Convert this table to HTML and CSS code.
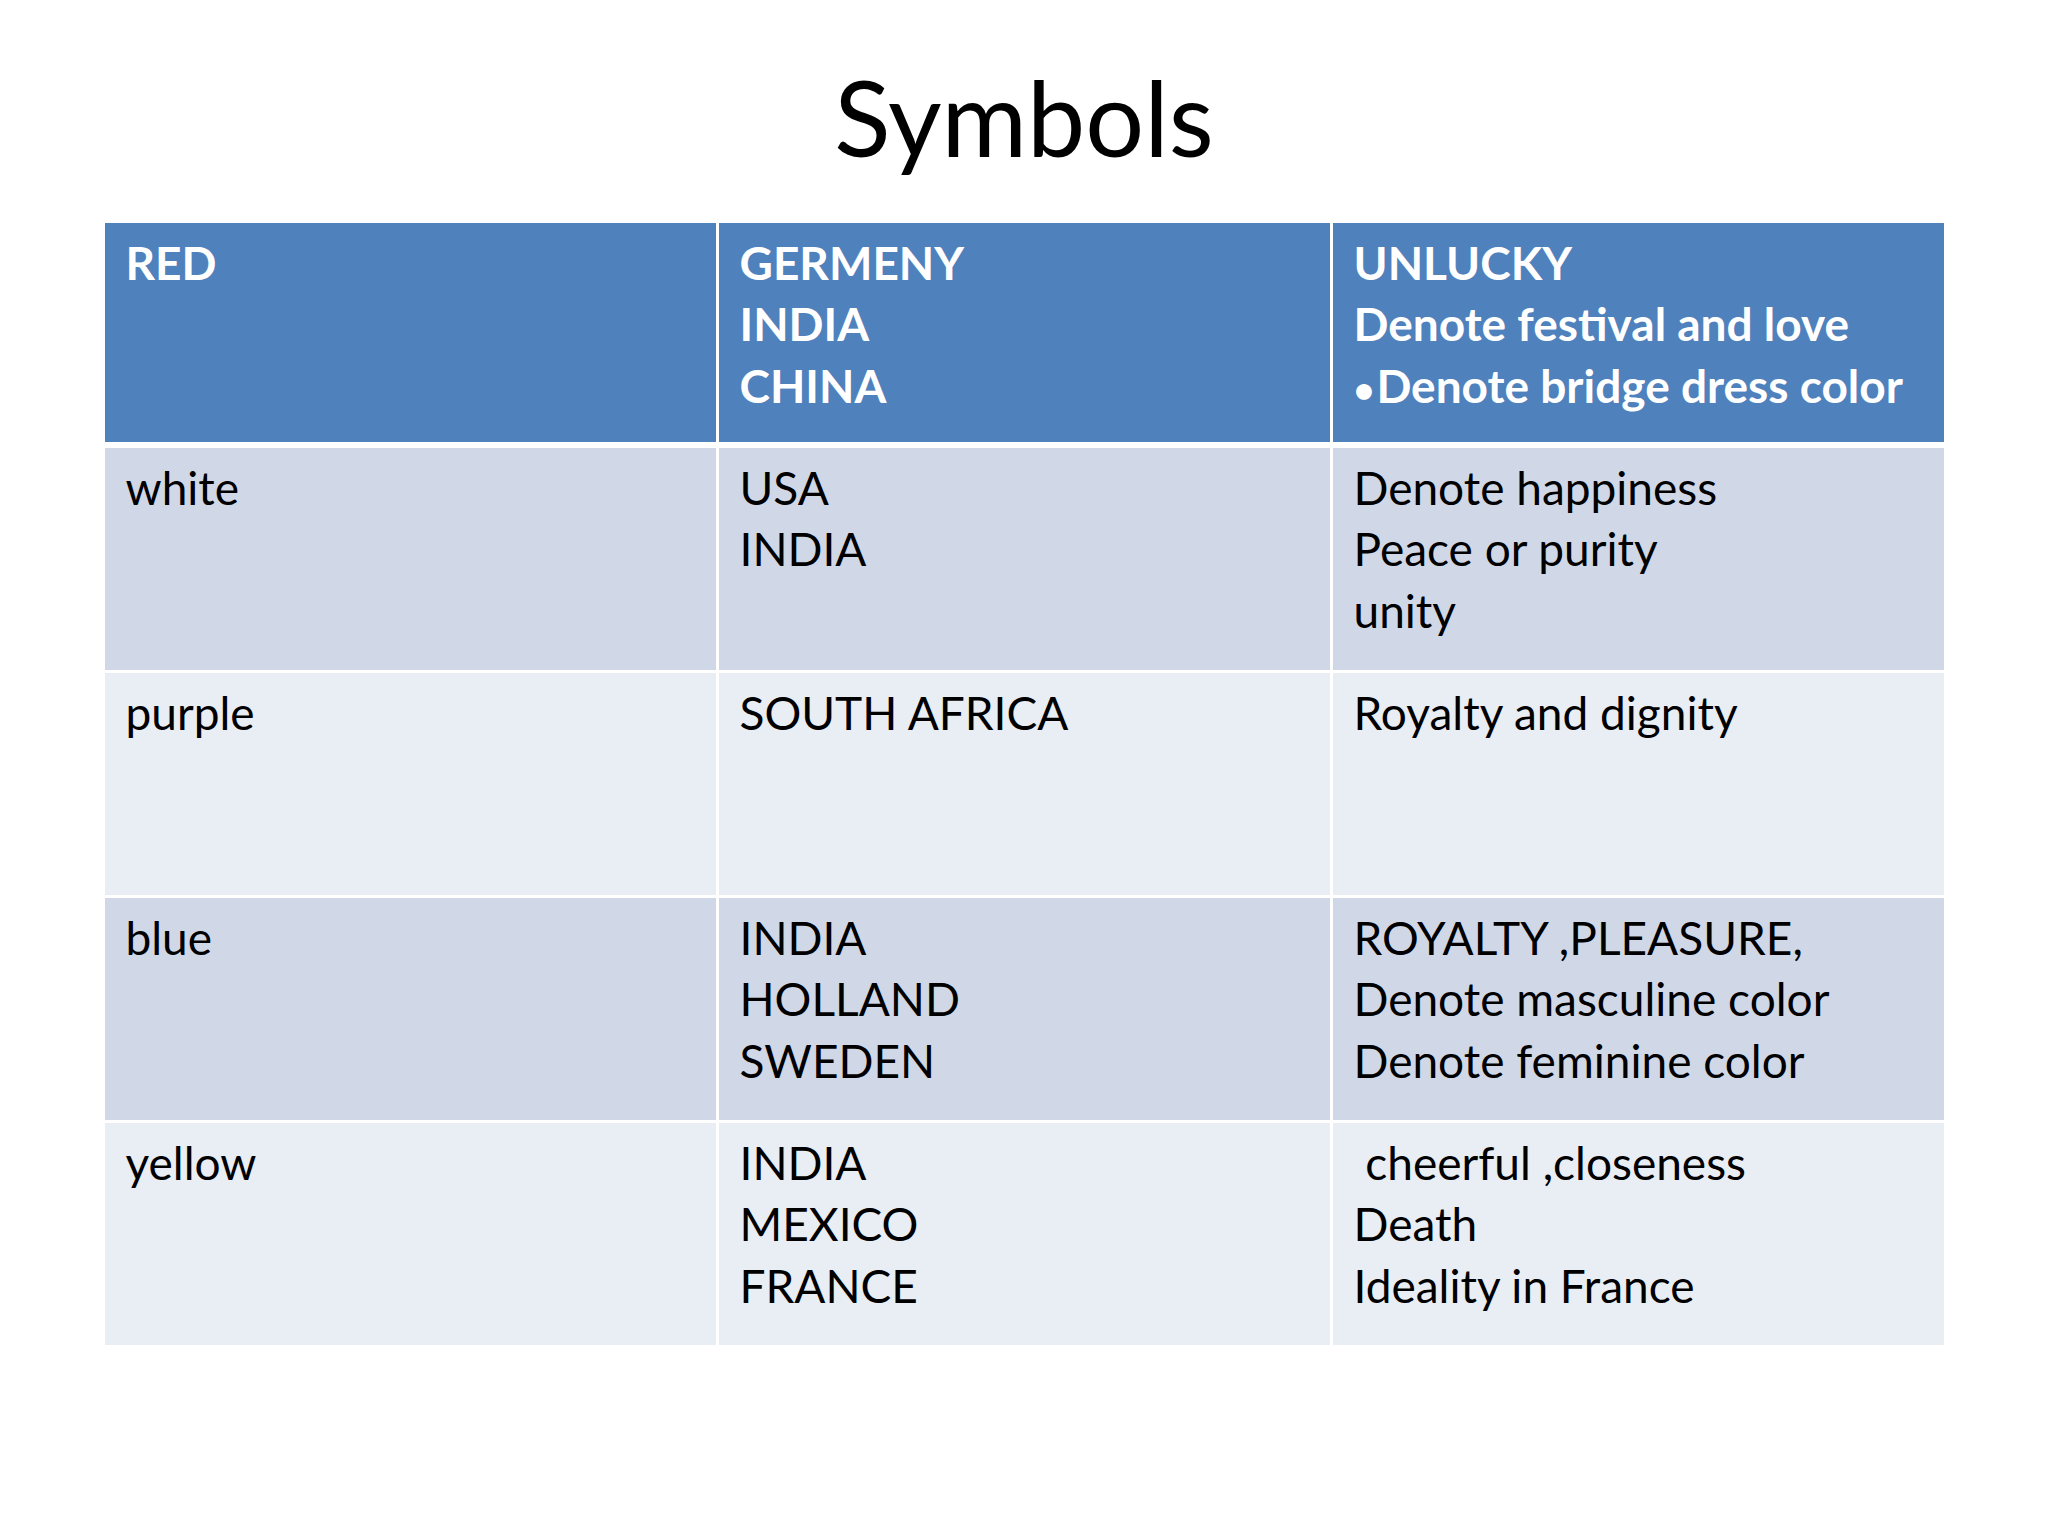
FILE: index.html
```html
<!DOCTYPE html>
<html>
<head>
<meta charset="utf-8">
<link rel="stylesheet" href="styles.css">
</head>
<body>
<div class="slide">
  <h1 class="title">Symbols</h1>
  <div class="table">
    <div class="cell head">RED</div>
    <div class="cell head">GERMENY<br>INDIA<br>CHINA</div>
    <div class="cell head">UNLUCKY<br>Denote festival and love<br><span class="bullet">•</span>Denote bridge dress color</div>

    <div class="cell dark">white</div>
    <div class="cell dark">USA<br>INDIA</div>
    <div class="cell dark">Denote happiness<br>Peace or purity<br>unity</div>

    <div class="cell light">purple</div>
    <div class="cell light">SOUTH AFRICA</div>
    <div class="cell light">Royalty and dignity</div>

    <div class="cell dark">blue</div>
    <div class="cell dark">INDIA<br>HOLLAND<br>SWEDEN</div>
    <div class="cell dark">ROYALTY ,PLEASURE,<br>Denote masculine color<br>Denote feminine color</div>

    <div class="cell light">yellow</div>
    <div class="cell light">INDIA<br>MEXICO<br>FRANCE</div>
    <div class="cell light">&nbsp;cheerful ,closeness<br>Death<br>Ideality in France</div>
  </div>
</div>
</body>
</html>
```

FILE: styles.css
```css
html, body {
  margin: 0;
  padding: 0;
  background: #ffffff;
}

.slide {
  width: 2048px;
  height: 1536px;
  display: flex;
  flex-direction: column;
  align-items: center;
  font-family: Lato, "Open Sans", sans-serif;
}

.title {
  margin: 55px 0 0 0;
  height: 168px;
  font-size: 104px;
  line-height: 124px;
  font-weight: 400;
  color: #000000;
}

.table {
  width: 1839px;
  display: grid;
  grid-template-columns: repeat(3, 1fr);
  grid-template-rows: 222px repeat(4, 222px);
  column-gap: 3px;
  row-gap: 3px;
  background: #ffffff;
}

.cell {
  box-sizing: border-box;
  padding: 9px 20px 0 21px;
  font-size: 46px;
  line-height: 61.4px;
  color: #000000;
  white-space: nowrap;
}

.head {
  background: #4f81bd;
  color: #ffffff;
  font-weight: 700;
  margin-bottom: 3px;
}

.bullet {
  font-size: 36px;
  margin-right: 2px;
}

.dark {
  background: #d0d8e8;
}

.light {
  background: #e9edf4;
}
```
